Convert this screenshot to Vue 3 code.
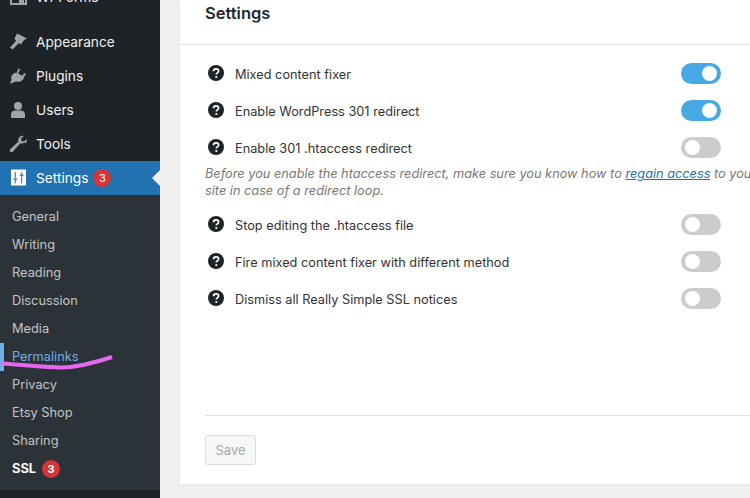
<template>
  <div class="page">
    <!-- sidebar -->
    <aside class="side">
      <div class="side__item side__item--first">
        <svg class="side__icon" viewBox="0 0 20 20"><path d="M3 3h15v14H3z" fill="none" stroke="#a0a5aa" stroke-width="2"/><path d="M11 12h5v4h-5z" fill="#a0a5aa"/></svg>
        <span>WPForms</span>
      </div>
      <div v-for="m in menu" :key="m.label" class="side__item">
        <svg class="side__icon" viewBox="0 0 20 20" v-html="m.icon"></svg>
        <span>{{ m.label }}</span>
      </div>
      <div class="side__item side__item--current">
        <svg class="side__icon" viewBox="0 0 20 20">
          <rect x="3" y="1.500" width="15" height="16" fill="#fff"/>
          <path fill="#2271b1" d="M6.800 4h1v6h-1zM6.800 13h1v2.500h-1zM4.800 10.500h5L7.300 13zM13.200 4h1v2h-1zM13.200 9h1v6.500h-1zM11.200 6.500h5L13.700 9z"/>
        </svg>
        <span>Settings</span>
        <span class="badge">3</span>
        <i class="side__arrow"></i>
      </div>
      <ul class="sub">
        <li v-for="s in submenu" :key="s" class="sub__item" :class="{ 'sub__item--active': s === 'Permalinks' }">{{ s }}</li>
        <li class="sub__item sub__item--bold">SSL <span class="badge badge--sub">3</span></li>
      </ul>
    </aside>

    <!-- contenu -->
    <main class="main">
      <section class="card">
        <h2 class="card__title">Settings</h2>
        <div class="card__body">
          <template v-for="o in options" :key="o.label">
            <div class="opt">
              <svg class="opt__help" viewBox="0 0 16 16">
                <circle cx="8" cy="8" r="8" fill="#1d2327"/>
                <path d="M5.500 6.200c0-1.500 1.100-2.400 2.600-2.400s2.500.9 2.500 2.200c0 1.900-2.300 1.900-2.300 3.500" fill="none" stroke="#fff" stroke-width="1.700"/>
                <circle cx="8.300" cy="12" r="1.100" fill="#fff"/>
              </svg>
              <span class="opt__label">{{ o.label }}</span>
              <span class="toggle" :class="{ 'toggle--on': o.on }"><i></i></span>
            </div>
            <p v-if="o.note" class="opt__note">
              Before you enable the htaccess redirect, make sure you know how to <a>regain access</a> to your site in case of a redirect loop.
            </p>
          </template>
        </div>
        <div class="card__foot">
          <button class="save" type="button">Save</button>
        </div>
      </section>
    </main>

    <!-- trait de surligneur par-dessus la capture -->
    <svg class="scribble" viewBox="0 0 750 498">
      <path d="M2 363.500C25 365 45 367.500 62 367.500C80 367 97 362 112 357" fill="none" stroke="#e568ef" stroke-width="4"/>
    </svg>
  </div>
</template>

<script setup>
const menu = [
  { label: 'Appearance', icon: '<path fill="#a0a5aa" d="M9 1.500 19 6.500l-3 1.500-3 4.500-2-1.500-6.500 6.500-2.500-2 6-6.500-1.500-2.500z"/>' },
  { label: 'Plugins', icon: '<path fill="#a0a5aa" d="M10.500 2.500 12.300 3.800 10 7.200 14 9.800 16.500 7 18 8.300l-2.500 3.300.6.700-2 2c-2 1.700-4 2-5.800 1L3 17.500 2 16.500 3.700 14c-1-1.800-.8-3.500.7-5.200L7 6.500l1.300 1z"/>' },
  { label: 'Users', icon: '<circle cx="10" cy="6" r="4" fill="#a0a5aa"/><path fill="#a0a5aa" d="M3 18v-3.500C3 12 5 10.500 7 10.500h6c2 0 4 1.500 4 4V18z"/>' },
  { label: 'Tools', icon: '<path fill="#a0a5aa" d="M16.700 8.500c-1.300 1.100-3 1.300-4.300.7L5 17.500c-.8.900-2 .9-2.700.2-.8-.7-.7-2 .1-2.800l8.200-7.500c-.6-1.500-.2-3.200 1-4.400 1.200-1.100 2.700-1.400 4.200-1l-2.700 2.500.5 2.400 2.400.6 2.700-2.500c.4 1.500 0 3.200-1.200 4.500z"/>' },
]
const submenu = ['General', 'Writing', 'Reading', 'Discussion', 'Media', 'Permalinks', 'Privacy', 'Etsy Shop', 'Sharing']
const options = [
  { label: 'Mixed content fixer', on: true },
  { label: 'Enable WordPress 301 redirect', on: true },
  { label: 'Enable 301 .htaccess redirect', on: false, note: true },
  { label: 'Stop editing the .htaccess file', on: false },
  { label: 'Fire mixed content fixer with different method', on: false },
  { label: 'Dismiss all Really Simple SSL notices', on: false },
]
</script>

<style>
html, body { margin: 0; overflow: hidden; }
</style>

<style scoped>
.page {
  position: relative;
  display: flex;
  width: 750px;
  height: 498px;
  overflow: hidden;
  background: #f0f0f1;
  font-family: Inter, "Liberation Sans", sans-serif;
}

/* sidebar */
.side {
  flex: 0 0 160px;
  height: 498px;
  background: #1d2327;
  color: #f0f0f1;
  font-size: 13.700px;
}
.side__item {
  position: relative;
  display: flex;
  align-items: center;
  height: 34px;
  padding-left: 8px;
}
.side__item span:not(.badge) {
  margin-top: -1px;
}
.side__item--first {
  margin-top: -20px;
  margin-bottom: 11px;
}
.side__icon {
  width: 20px;
  height: 20px;
  margin-right: 8px;
}
.side__item--current {
  background: #2271b1;
  color: #fff;
}
.side__arrow {
  position: absolute;
  right: 0;
  top: 9px;
  border: 8px solid transparent;
  border-right-color: #f0f0f1;
  border-left-width: 0;
}
.badge {
  display: inline-block;
  width: 18px;
  height: 18px;
  margin-left: 5px;
  border-radius: 50%;
  background: #d63638;
  color: #fff;
  font-size: 11px;
  font-weight: 400;
  line-height: 18px;
  text-align: center;
}
.badge--sub {
  margin-left: 3px;
  font-weight: 700;
}

.sub {
  margin: 0;
  padding: 8px 0 7px;
  list-style: none;
  background: #2c3338;
}
.sub__item {
  height: 28px;
  padding-left: 12px;
  box-sizing: border-box;
  font-size: 12.800px;
  line-height: 28px;
  color: #c3c4c7;
}
.sub__item--active {
  color: #72aee6;
  box-shadow: inset 4px 0 0 #72aee6;
}
.sub__item--bold {
  color: #fff;
  font-weight: 700;
}

/* contenu */
.main {
  flex: 1;
  padding-left: 20px;
  min-width: 0;
}
.card {
  display: flex;
  flex-direction: column;
  width: 600px;
  height: 484px;
  background: #fff;
  box-shadow: 0 0 5px rgba(0, 0, 0, 0.05);
  color: #333;
}
.card__title {
  height: 45px;
  margin: 0;
  padding: 0 25px;
  box-sizing: border-box;
  border-bottom: 1px solid #dedede;
  font-size: 16.500px;
  font-weight: 600;
  line-height: 27px;
  color: #23282d;
}
.card__body {
  flex: 1;
  padding: 11px 25px 0;
}
.opt {
  display: flex;
  align-items: center;
  height: 37px;
  padding-left: 3px;
  padding-right: 34px;
}
.opt__help {
  width: 16px;
  height: 16px;
  margin-top: -3px;
  margin-right: 11px;
}
.opt__label {
  flex: 1;
  font-size: 12.750px;
  color: #333;
}
.toggle {
  position: relative;
  width: 40px;
  height: 21px;
  margin-bottom: 2px;
  border-radius: 11px;
  background: #ccc;
}
.toggle i {
  position: absolute;
  top: 3px;
  left: 4px;
  width: 15px;
  height: 15px;
  border-radius: 50%;
  background: #fff;
}
.toggle--on {
  background: #46a9e4;
}
.toggle--on i {
  left: 21px;
}
.opt__note {
  width: 570px;
  margin: -2px 0 8px;
  font-size: 12.750px;
  font-style: italic;
  line-height: 17px;
  color: #777;
}
.opt__note a {
  color: #2271b1;
  text-decoration: underline;
}
.card__foot {
  box-sizing: border-box;
  height: 69px;
  margin-left: 25px;
  padding-top: 19px;
  border-top: 1px solid #dedede;
}
.save {
  display: block;
  width: 51px;
  height: 30px;
  padding: 0;
  border: 1px solid #dcdcde;
  border-radius: 3px;
  background: #f6f7f7;
  color: #a7aaad;
  font-family: inherit;
  font-size: 13px;
}

.scribble {
  position: absolute;
  inset: 0;
  width: 750px;
  height: 498px;
  pointer-events: none;
}
</style>
